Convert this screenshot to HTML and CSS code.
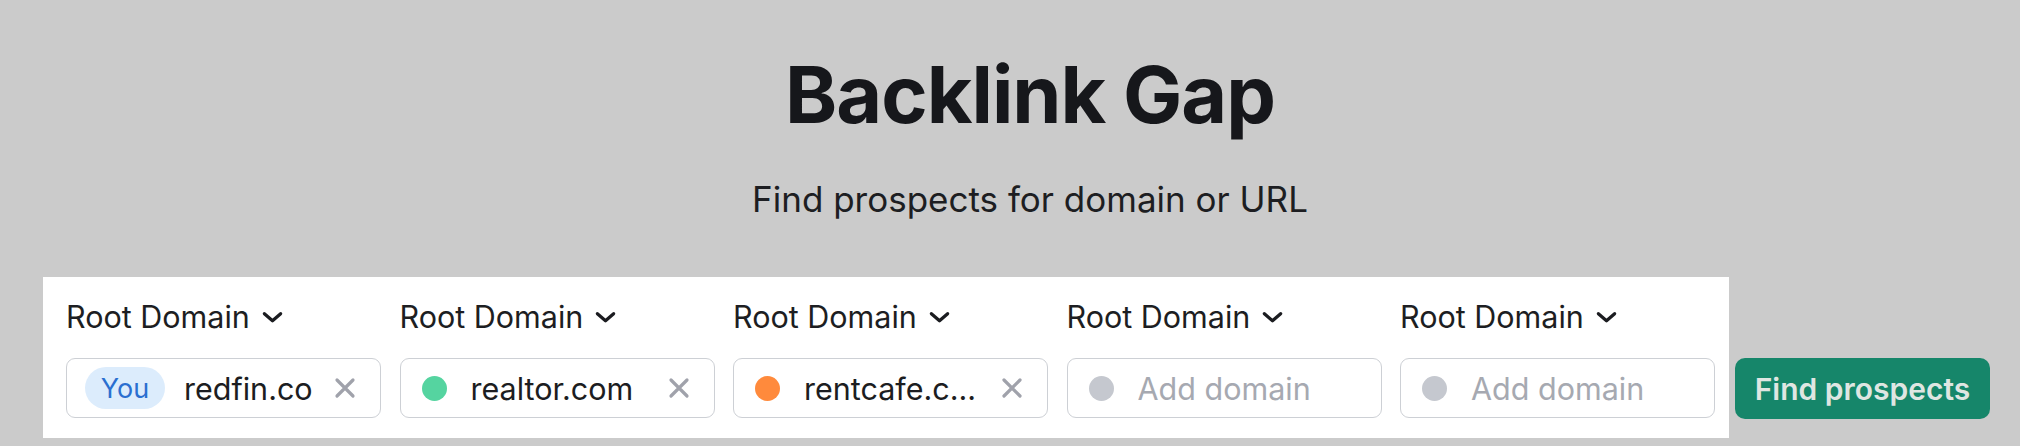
FILE: index.html
```html
<!DOCTYPE html>
<html lang="en">
<head>
<meta charset="utf-8">
<title>Backlink Gap</title>
<link rel="stylesheet" href="styles.css">
</head>
<body>
<main class="page">
  <header class="hero">
    <h1 class="title">Backlink Gap</h1>
    <p class="subtitle">Find prospects for domain or URL</p>
  </header>
  <section class="search-row">
    <div class="panel">
      <div class="field">
        <button class="type-select">Root Domain
          <svg class="chevron" viewBox="0 0 22 12"><path d="M2.5 2.5l8.5 7.5 8.5-7.5" fill="none" stroke="currentColor" stroke-width="3.4" stroke-linecap="round" stroke-linejoin="round"/></svg>
        </button>
        <div class="domain-input">
          <span class="you-badge">You</span>
          <span class="domain-text">redfin.co</span>
          <svg class="clear" viewBox="0 0 22 22"><path d="M3 3l16 16M19 3L3 19" fill="none" stroke="currentColor" stroke-width="3.2" stroke-linecap="round"/></svg>
        </div>
      </div>
      <div class="field">
        <button class="type-select">Root Domain
          <svg class="chevron" viewBox="0 0 22 12"><path d="M2.5 2.5l8.5 7.5 8.5-7.5" fill="none" stroke="currentColor" stroke-width="3.4" stroke-linecap="round" stroke-linejoin="round"/></svg>
        </button>
        <div class="domain-input">
          <span class="dot dot-green"></span>
          <span class="domain-text">realtor.com</span>
          <svg class="clear" viewBox="0 0 22 22"><path d="M3 3l16 16M19 3L3 19" fill="none" stroke="currentColor" stroke-width="3.2" stroke-linecap="round"/></svg>
        </div>
      </div>
      <div class="field">
        <button class="type-select">Root Domain
          <svg class="chevron" viewBox="0 0 22 12"><path d="M2.5 2.5l8.5 7.5 8.5-7.5" fill="none" stroke="currentColor" stroke-width="3.4" stroke-linecap="round" stroke-linejoin="round"/></svg>
        </button>
        <div class="domain-input">
          <span class="dot dot-orange"></span>
          <span class="domain-text">rentcafe.c...</span>
          <svg class="clear" viewBox="0 0 22 22"><path d="M3 3l16 16M19 3L3 19" fill="none" stroke="currentColor" stroke-width="3.2" stroke-linecap="round"/></svg>
        </div>
      </div>
      <div class="field">
        <button class="type-select">Root Domain
          <svg class="chevron" viewBox="0 0 22 12"><path d="M2.5 2.5l8.5 7.5 8.5-7.5" fill="none" stroke="currentColor" stroke-width="3.4" stroke-linecap="round" stroke-linejoin="round"/></svg>
        </button>
        <div class="domain-input">
          <span class="dot dot-empty"></span>
          <span class="domain-text placeholder">Add domain</span>
        </div>
      </div>
      <div class="field">
        <button class="type-select">Root Domain
          <svg class="chevron" viewBox="0 0 22 12"><path d="M2.5 2.5l8.5 7.5 8.5-7.5" fill="none" stroke="currentColor" stroke-width="3.4" stroke-linecap="round" stroke-linejoin="round"/></svg>
        </button>
        <div class="domain-input">
          <span class="dot dot-empty"></span>
          <span class="domain-text placeholder">Add domain</span>
        </div>
      </div>
    </div>
    <button class="find-btn">Find prospects</button>
  </section>
</main>
</body>
</html>
```

FILE: styles.css
```css
* {
  box-sizing: border-box;
}

html, body {
  margin: 0;
  padding: 0;
}

body {
  background: #cbcbcb;
  font-family: Inter, "Noto Sans", "Liberation Sans", sans-serif;
  color: #1d1e22;
  width: 2020px;
  height: 446px;
  overflow: hidden;
}

.page {
  display: flex;
  flex-direction: column;
}

.hero {
  display: flex;
  flex-direction: column;
  align-items: center;
  padding: 46px 0 0 40px;
}

.title {
  margin: 0;
  font-size: 79px;
  line-height: 96px;
  font-weight: 700;
  letter-spacing: -1px;
  color: #16171b;
}

.subtitle {
  margin: 37px 0 0;
  font-size: 35px;
  line-height: 40px;
  font-weight: 400;
  color: #1d1e22;
}

.search-row {
  display: flex;
  align-items: flex-end;
  margin-top: 58px;
  padding-left: 43px;
}

.panel {
  display: flex;
  gap: 18.5px;
  width: 1686px;
  background: #ffffff;
  padding: 22px 13px 20px 23px;
}

.field {
  display: flex;
  flex-direction: column;
  width: 315px;
  flex: 0 0 315px;
}

.type-select {
  display: flex;
  align-items: center;
  gap: 12px;
  align-self: flex-start;
  border: 0;
  background: none;
  padding: 0;
  margin: 0;
  font-family: inherit;
  font-size: 30.5px;
  line-height: 36px;
  color: #1d1e22;
}

.chevron {
  width: 21px;
  height: 12px;
  color: #1b1c20;
}

.domain-input {
  display: flex;
  align-items: center;
  height: 60px;
  margin-top: 23px;
  padding: 0 24px 0 21px;
  border: 1.5px solid #cdd0d5;
  border-radius: 9px;
  font-size: 30.5px;
}

.you-badge {
  display: flex;
  align-items: center;
  justify-content: center;
  width: 80px;
  height: 42px;
  margin-left: -3px;
  margin-right: 19px;
  border-radius: 21px;
  background: #dcecfc;
  color: #2a6fd0;
  font-size: 27px;
}

.dot {
  width: 25px;
  height: 25px;
  flex: 0 0 25px;
  border-radius: 50%;
  margin-right: 24px;
}

.dot-green {
  background: #55d4a0;
}

.dot-orange {
  background: #ff8a3c;
}

.dot-empty {
  background: #c5c8cf;
}

.domain-text {
  flex: 1;
  white-space: nowrap;
  overflow: hidden;
  color: #1c1d21;
}

.placeholder {
  color: #a6a9b1;
}

.clear {
  width: 22px;
  height: 22px;
  flex: 0 0 22px;
  color: #a0a2ab;
}

.find-btn {
  width: 255px;
  height: 61px;
  margin: 0 0 19px 6px;
  border: 0;
  border-radius: 10px;
  background: #16866a;
  color: #dfe6e2;
  font-family: inherit;
  font-size: 30px;
  font-weight: 600;
  padding: 0;
}
```
